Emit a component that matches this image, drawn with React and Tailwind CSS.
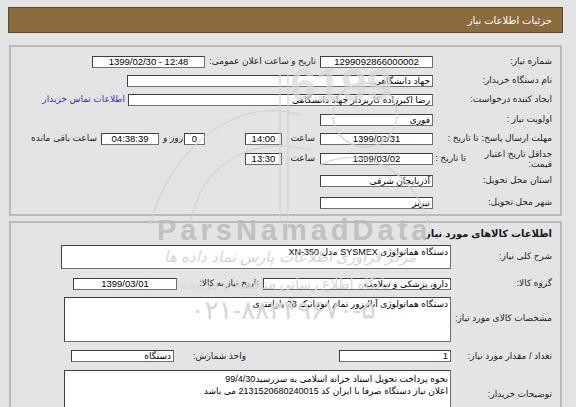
import React from "react";

const box = "h-[12px] bg-white border border-[#6f6f6f] border-t-[#3f3f3f] border-l-[#3f3f3f] flex items-center px-[2px] leading-[10px] text-black overflow-hidden whitespace-nowrap shrink-0";

function Label({ w, children, className = "" }) {
  return <div className={"shrink-0 text-right whitespace-nowrap " + className} style={{ width: w }}>{children}</div>;
}

function Row({ h, children }) {
  return <div className={"flex items-center " + h}>{children}</div>;
}

function Watermark() {
  return (
    <div className="pointer-events-none absolute inset-0 overflow-hidden">
      <svg className="absolute left-[130px] top-[55px]" width="320" height="170" viewBox="0 0 320 170" fill="none" stroke="#d2d2d2" strokeWidth="1.5" opacity="0.8">
        <path d="M20 170 C 40 90, 110 40, 170 60" />
        <path d="M60 170 C 70 110, 120 80, 180 95" />
        <path d="M150 20 L150 170" />
        <path d="M158 20 L158 170" />
        <path d="M300 170 C 280 110, 230 90, 190 110" />
        <circle cx="235" cy="60" r="32" />
      </svg>
      <div className="absolute left-[290px] top-[62px] text-[46px] font-bold leading-none text-[#d8d8d8] opacity-70 font-['Liberation_Sans',sans-serif]" dir="ltr">6199</div>
      <div className="absolute left-[157px] top-[216px] text-[29px] font-bold tracking-[4px] leading-none text-[#b9b9b9] opacity-80 font-['Liberation_Sans',sans-serif]" dir="ltr">ParsNamadData</div>
      <div className="absolute left-[150px] top-[249px] w-[280px] text-center text-[15px] italic leading-none text-[#d4d4d4]">مرکز فراوری اطلاعات پارس نماد داده ها</div>
      <div className="absolute left-[155px] top-[277px] w-[260px] text-center text-[14px] leading-none text-[#d6d6d6]">پایگاه اطلاع رسانی مناقصه و مزایده</div>
      <div className="absolute left-[148px] top-[297px] w-[270px] text-center text-[26px] leading-none text-[#d6d6d6]" dir="ltr">۰۲۱-۸۸۳۴۹۶۷۰-۵</div>
    </div>
  );
}

export default function App() {
  return (
    <div dir="rtl" className="relative h-[407px] overflow-hidden bg-[#e4e4e4] pt-[7px] text-[9px] text-[#222] font-['Liberation_Sans','DejaVu_Sans',sans-serif]">
      <div className="mr-[13px] w-[555px]">
        <div className="flex h-[26px] items-center border border-[#5a482e] bg-[#8b6b3e] pr-[10px] text-[10px] text-white">
          جزئیات اطلاعات نیاز
        </div>

        <div className="ml-[1px] mr-[1px] mt-[12px] h-[171px] border-2 border-[#b9b9b9] pr-[8px] pt-[5px]">
          <Row h="h-[19px]">
            <Label w={119}>شماره نیاز:</Label>
            <div className={box + " w-[113px] justify-center text-[9.5px]"}>1299092866000002</div>
            <Label w={115} className="pr-[4px]">تاریخ و ساعت اعلان عمومی:</Label>
            <div className={box + " w-[113px] justify-center text-[9.5px]"}>
              <span dir="ltr">1399/02/30 - 12:48</span>
            </div>
          </Row>
          <Row h="h-[19px]">
            <Label w={119}>نام دستگاه خریدار:</Label>
            <div className={box + " w-[306px]"}>جهاد دانشگاهی</div>
          </Row>
          <Row h="h-[20px]">
            <Label w={119}>ایجاد کننده درخواست:</Label>
            <div className={box + " w-[305px]"}>رضا اکبرزاده کاربردار جهاد دانشگاهی</div>
            <div className="pr-[3px] text-[#3535b0]">اطلاعات تماس خریدار</div>
          </Row>
          <Row h="h-[19px]">
            <Label w={119}>اولویت نیاز :</Label>
            <div className={box + " w-[113px]"}>فوری</div>
          </Row>
          <Row h="h-[19px]">
            <div className="flex w-[119px] shrink-0 items-center gap-[3px] whitespace-nowrap">
              <span>مهلت ارسال پاسخ:</span>
              <span>تا تاریخ :</span>
            </div>
            <div className={box + " w-[113px] justify-center text-[9.5px]"}>1399/02/31</div>
            <Label w={38} className="pr-[5px]">ساعت</Label>
            <div className={box + " w-[37px] justify-center text-[9.5px]"}>14:00</div>
            <div className="w-[40px] shrink-0" />
            <div className={box + " w-[21px] justify-center text-[9.5px]"}>0</div>
            <Label w={25} className="pr-[1px]">روز و</Label>
            <div className={box + " w-[58px] justify-center bg-[#eeeecb] text-[9.5px] text-[#8a8a6a]"}>04:38:39</div>
            <div className="pr-[4px] whitespace-nowrap">ساعت باقی مانده</div>
          </Row>
          <Row h="h-[21px]">
            <div className="flex w-[119px] shrink-0 items-center whitespace-nowrap">
              <div className="w-[70px] text-right leading-[10px]">
                حداقل تاریخ اعتبار
                <br />
                قیمت:
              </div>
              <span className="mr-[16px]">تا تاریخ :</span>
            </div>
            <div className={box + " w-[113px] justify-center text-[9.5px]"}>1399/03/02</div>
            <Label w={38} className="pr-[5px]">ساعت</Label>
            <div className={box + " w-[37px] justify-center text-[9.5px]"}>13:30</div>
          </Row>
          <Row h="h-[24px]">
            <Label w={119}>استان محل تحویل:</Label>
            <div className={box + " w-[113px]"}>آذربایجان شرقی</div>
          </Row>
          <Row h="h-[19px]">
            <Label w={119}>شهر محل تحویل:</Label>
            <div className={box + " w-[113px]"}>تبریز</div>
          </Row>
        </div>

        <div className="ml-[1px] mr-[1px] mt-[5px] h-[220px] border-2 border-[#b9b9b9] pr-[8px]">
          <div className="flex h-[20px] items-center text-[10px] font-bold text-[#1a1a1a]">
            اطلاعات کالاهای مورد نیاز
          </div>
          <div className="mt-[2px] flex items-center">
            <Label w={101}>شرح کلی نیاز:</Label>
            <div className="h-[24px] w-[390px] shrink-0 border border-[#6f6f6f] border-l-[#3f3f3f] border-t-[#3f3f3f] bg-white px-[2px] pt-[1px] leading-[11px] text-black">
              دستگاه هماتولوژی SYSMEX مدل XN-350
            </div>
          </div>
          <div className="mt-[8px] flex items-center">
            <Label w={101}>گروه کالا:</Label>
            <div className={box + " w-[188px]"}>دارو، پزشکی و سلامت</div>
            <Label w={86} className="pr-[4px]">تاریخ نیاز به کالا:</Label>
            <div className={box + " w-[104px] justify-center text-[9.5px]"}>1399/03/01</div>
          </div>
          <div className="mt-[6px] flex items-center">
            <Label w={101}>مشخصات کالای مورد نیاز:</Label>
            <div className="h-[45px] w-[387px] shrink-0 border border-[#6f6f6f] border-l-[#3f3f3f] border-t-[#3f3f3f] bg-white px-[2px] pt-[1px] leading-[11px] text-black">
              دستگاه هماتولوژی آنالیزور تمام اتوماتیک 28 پارامتری
            </div>
          </div>
          <div className="mt-[8px] flex items-center">
            <Label w={101}>تعداد / مقدار مورد نیاز:</Label>
            <div className={box + " w-[112px] text-[9.5px]"}>1</div>
            <Label w={165} className="pr-[93px]">واحد شمارش:</Label>
            <div className={box + " w-[103px]"}>دستگاه</div>
          </div>
          <div className="mt-[7px] flex items-center">
            <Label w={101}>توضیحات خریدار:</Label>
            <div className="h-[50px] w-[387px] shrink-0 border border-[#6f6f6f] border-l-[#3f3f3f] border-t-[#3f3f3f] bg-white px-[2px] pt-[2px] leading-[12px] text-black">
              نحوه پرداخت تحویل اسناد خزانه اسلامی به سررسید99/4/30
              <br />
              اعلان نیاز دستگاه صرفا با ایران کد 2131520680240015 می باشد
            </div>
          </div>
        </div>
      </div>
      <Watermark />
    </div>
  );
}
